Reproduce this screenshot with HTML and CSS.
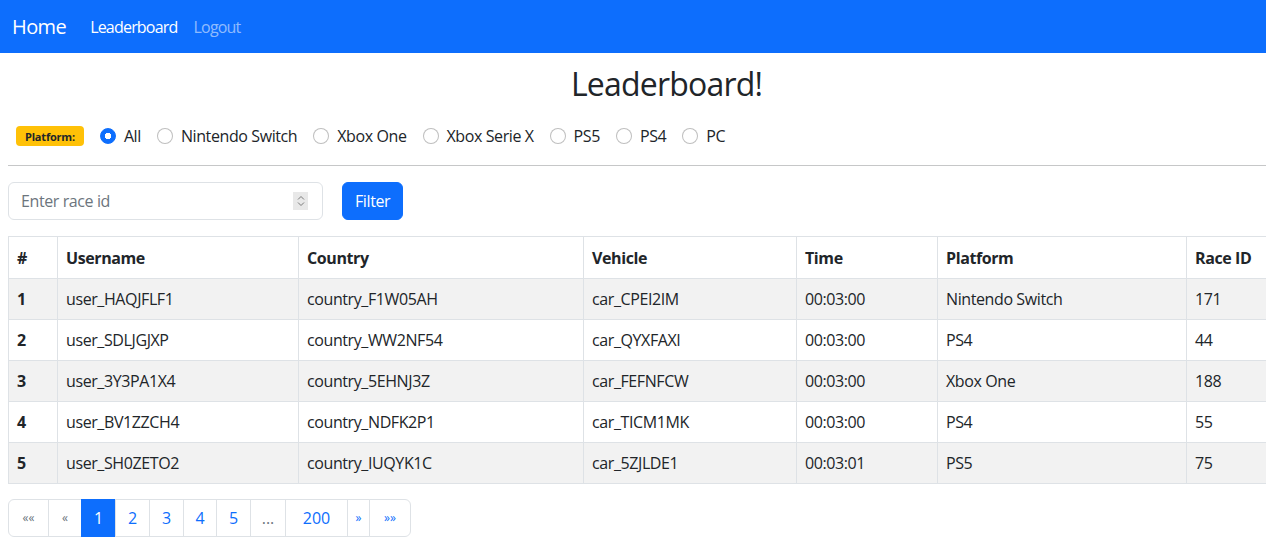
FILE: index.html
```html
<!DOCTYPE html>
<html lang="en">
<head>
<meta charset="utf-8">
<title>Leaderboard</title>
<link rel="stylesheet" href="styles.css">
</head>
<body>
<nav class="navbar">
  <a class="brand" href="#">Home</a>
  <a class="nav-link active" href="#">Leaderboard</a>
  <a class="nav-link" href="#">Logout</a>
</nav>
<main class="page">
  <h2 class="title">Leaderboard!</h2>
  <div class="platforms">
    <span class="badge">Platform:</span>
    <label class="check"><span class="radio checked"></span>All</label>
    <label class="check"><span class="radio"></span>Nintendo Switch</label>
    <label class="check"><span class="radio"></span>Xbox One</label>
    <label class="check"><span class="radio"></span>Xbox Serie X</label>
    <label class="check"><span class="radio"></span>PS5</label>
    <label class="check"><span class="radio"></span>PS4</label>
    <label class="check"><span class="radio"></span>PC</label>
  </div>
  <hr class="divider">
  <form class="filter">
    <div class="field">
      <input class="field-input" type="text" placeholder="Enter race id">
      <span class="spin">
        <svg width="10" height="14" viewBox="0 0 10 14"><path d="M2 5.5 L5 2.5 L8 5.5 M2 8.5 L5 11.5 L8 8.5" fill="none" stroke="#7a7a7a" stroke-width="1"/></svg>
      </span>
    </div>
    <button class="btn" type="button">Filter</button>
  </form>
  <div class="table-wrap">
  <table class="table">
    <colgroup>
      <col class="c1"><col class="c2"><col class="c3"><col class="c4"><col class="c5"><col class="c6"><col class="c7">
    </colgroup>
    <thead>
      <tr><th>#</th><th>Username</th><th>Country</th><th>Vehicle</th><th>Time</th><th>Platform</th><th>Race ID</th></tr>
    </thead>
    <tbody>
      <tr><th>1</th><td>user_HAQJFLF1</td><td>country_F1W05AH</td><td>car_CPEI2IM</td><td>00:03:00</td><td>Nintendo Switch</td><td>171</td></tr>
      <tr><th>2</th><td>user_SDLJGJXP</td><td>country_WW2NF54</td><td>car_QYXFAXI</td><td>00:03:00</td><td>PS4</td><td>44</td></tr>
      <tr><th>3</th><td>user_3Y3PA1X4</td><td>country_5EHNJ3Z</td><td>car_FEFNFCW</td><td>00:03:00</td><td>Xbox One</td><td>188</td></tr>
      <tr><th>4</th><td>user_BV1ZZCH4</td><td>country_NDFK2P1</td><td>car_TICM1MK</td><td>00:03:00</td><td>PS4</td><td>55</td></tr>
      <tr><th>5</th><td>user_SH0ZETO2</td><td>country_IUQYK1C</td><td>car_5ZJLDE1</td><td>00:03:01</td><td>PS5</td><td>75</td></tr>
    </tbody>
  </table>
  </div>
  <ul class="pagination">
    <li class="page-item disabled arrows w41"><span>&laquo;&laquo;</span></li>
    <li class="page-item disabled arrows w33"><span>&laquo;</span></li>
    <li class="page-item active w34"><span>1</span></li>
    <li class="page-item w34"><span>2</span></li>
    <li class="page-item w34"><span>3</span></li>
    <li class="page-item w33"><span>4</span></li>
    <li class="page-item w34"><span>5</span></li>
    <li class="page-item disabled w35"><span>...</span></li>
    <li class="page-item w62"><span>200</span></li>
    <li class="page-item arrows w22"><span>&raquo;</span></li>
    <li class="page-item arrows w41"><span>&raquo;&raquo;</span></li>
  </ul>
</main>
</body>
</html>
```
FILE: styles.css
```css
* { box-sizing: border-box; }
html, body {
  margin: 0;
  padding: 0;
  background: #fff;
  color: #212529;
  font-family: "Open Sans", "Noto Sans", sans-serif;
  font-size: 16px;
  line-height: 1.5;
  overflow: hidden;
}
a { text-decoration: none; }

.navbar {
  height: 53px;
  background: #0d6efd;
  display: flex;
  align-items: center;
  padding: 0 12px;
}
.brand {
  color: #fff;
  font-size: 20px;
  margin-right: 16px;
  letter-spacing: -0.6px;
}
.nav-link {
  color: rgba(255,255,255,.55);
  padding: 8px;
  letter-spacing: -0.8px;
}
.nav-link.active { color: #fff; }

.page {
  padding: 0 0 0 8px;
}
.title {
  margin: 12px 0 0;
  padding-left: 59px;
  text-align: center;
  font-size: 32px;
  font-weight: 400;
  line-height: 1.2;
  letter-spacing: -0.8px;
}
.platforms {
  display: flex;
  align-items: center;
  padding: 0 8px;
  margin-top: 16px;
  height: 34px;
  letter-spacing: -0.4px;
}
.badge {
  background: #ffc107;
  color: #212529;
  font-size: 11px;
  font-weight: 700;
  line-height: 1;
  padding: 4px 9px;
  border-radius: 4px;
  margin-right: 16px;
  height: 20px;
  display: inline-flex;
  align-items: center;
  letter-spacing: -0.2px;
}
.check {
  display: inline-flex;
  align-items: center;
  margin-right: 16px;
}
.radio {
  width: 16px;
  height: 16px;
  border: 1px solid rgba(0,0,0,.25);
  border-radius: 50%;
  margin-right: 8px;
  background: #fff;
}
.radio.checked {
  border-color: #0d6efd;
  background: radial-gradient(circle, #fff 0 3px, #0d6efd 3.5px);
}
.divider {
  margin: 12px 0 16px;
  border: 0;
  border-top: 1px solid #c6c7c8;
}
.filter {
  display: flex;
  align-items: center;
  gap: 19px;
  margin-bottom: 16px;
}
.field {
  width: 315px;
  height: 38px;
  border: 1px solid #dee2e6;
  border-radius: 6px;
  display: flex;
  align-items: center;
  padding: 0 14px 0 12px;
}
.field-input {
  flex: 1;
  border: 0;
  outline: 0;
  font: inherit;
  color: #212529;
  letter-spacing: -0.4px;
  background: transparent;
  padding: 0;
}
.field-input::placeholder { color: #6c757d; }
.spin {
  width: 15px;
  height: 18px;
  background: #e8e8e8;
  display: flex;
  align-items: center;
  justify-content: center;
}
.btn {
  height: 38px;
  padding: 0 12px;
  background: #0d6efd;
  color: #fff;
  border: 1px solid #0d6efd;
  border-radius: 6px;
  font: inherit;
  letter-spacing: -0.4px;
}
.table-wrap {
  overflow: hidden;
  margin-bottom: 15px;
}
.table {
  border-collapse: collapse;
  table-layout: fixed;
  width: 1300px;
  letter-spacing: -0.4px;
}
.c1 { width: 49px; }
.c2 { width: 241px; }
.c3 { width: 285px; }
.c4 { width: 213px; }
.c5 { width: 141px; }
.c6 { width: 249px; }
.c7 { width: 122px; }
.table th, .table td {
  border: 1px solid #dee2e6;
  padding: 8px;
  text-align: left;
  height: 41px;
  vertical-align: middle;
}
.table thead th { height: 42px; font-weight: 700; }
.table tbody th { font-weight: 700; }
.table tbody tr:nth-child(odd) { background: #f2f2f2; }
.pagination {
  list-style: none;
  margin: 0;
  padding: 0;
  display: flex;
}
.page-item { margin-left: -1px; }
.page-item:first-child { margin-left: 0; }
.page-item span {
  display: block;
  height: 38px;
  line-height: 36px;
  text-align: center;
  border: 1px solid #dee2e6;
  color: #0d6efd;
  background: #fff;
}
.w22 span { width: 23px; }
.w33 span { width: 34px; }
.w34 span { width: 35px; }
.w35 span { width: 36px; }
.w41 span { width: 42px; }
.w62 span { width: 63px; }
.page-item:first-child span { border-radius: 6px 0 0 6px; width: 41px; }
.page-item:last-child span { border-radius: 0 6px 6px 0; }
.page-item.disabled span { color: #6c757d; }
.page-item.arrows span { font-size: 12px; }
.page-item.active span {
  background: #0d6efd;
  border-color: #0d6efd;
  color: #fff;
}
```
